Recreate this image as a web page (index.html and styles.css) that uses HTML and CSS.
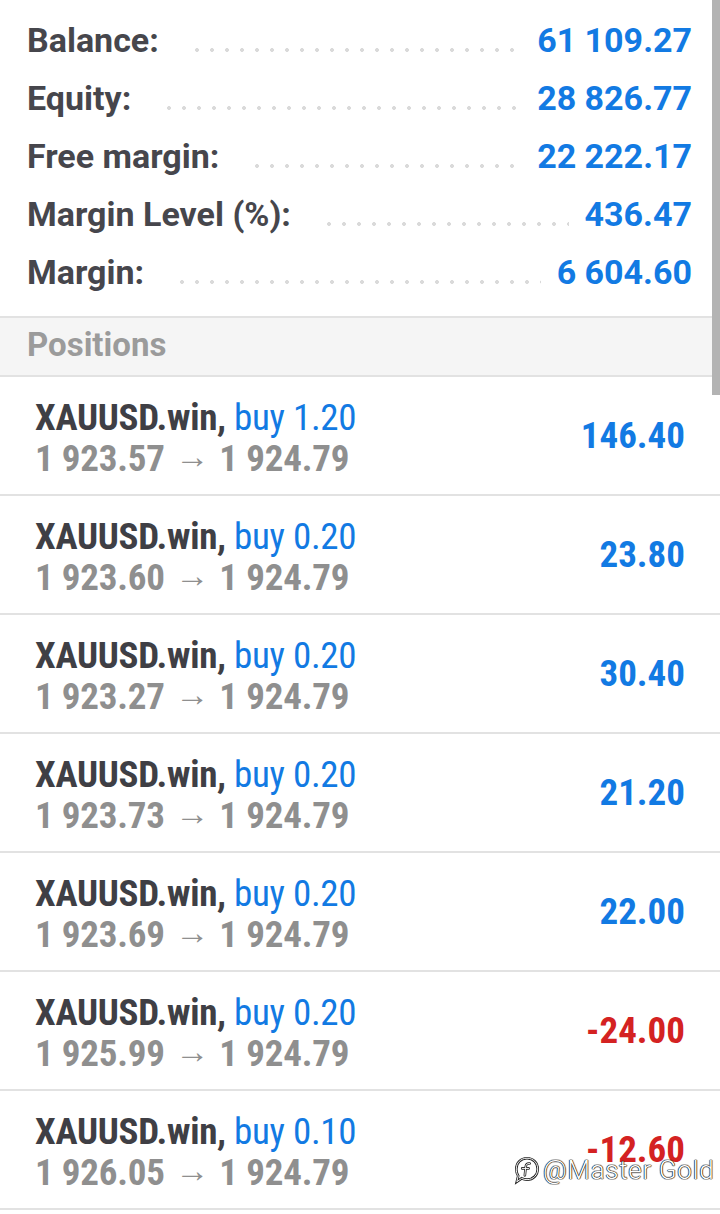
FILE: index.html
```html
<!DOCTYPE html>
<html>
<head>
<meta charset="utf-8">
<link rel="stylesheet" href="styles.css">
</head>
<body>
<div class="page">
  <section class="summary">
    <div class="srow"><span class="label">Balance:</span><span class="leader"></span><span class="value">61 109.27</span></div>
    <div class="srow"><span class="label">Equity:</span><span class="leader"></span><span class="value">28 826.77</span></div>
    <div class="srow"><span class="label">Free margin:</span><span class="leader"></span><span class="value">22 222.17</span></div>
    <div class="srow"><span class="label">Margin Level (%):</span><span class="leader"></span><span class="value">436.47</span></div>
    <div class="srow"><span class="label">Margin:</span><span class="leader"></span><span class="value">6 604.60</span></div>
  </section>
  <div class="section-head">Positions</div>
  <ul class="positions">
    <li class="pos"><div class="info"><div class="title"><b>XAUUSD.win,</b> <span class="side">buy 1.20</span></div><div class="prices">1 923.57 <span class="arrow">→</span> 1 924.79</div></div><div class="profit">146.40</div></li>
    <li class="pos"><div class="info"><div class="title"><b>XAUUSD.win,</b> <span class="side">buy 0.20</span></div><div class="prices">1 923.60 <span class="arrow">→</span> 1 924.79</div></div><div class="profit">23.80</div></li>
    <li class="pos"><div class="info"><div class="title"><b>XAUUSD.win,</b> <span class="side">buy 0.20</span></div><div class="prices">1 923.27 <span class="arrow">→</span> 1 924.79</div></div><div class="profit">30.40</div></li>
    <li class="pos"><div class="info"><div class="title"><b>XAUUSD.win,</b> <span class="side">buy 0.20</span></div><div class="prices">1 923.73 <span class="arrow">→</span> 1 924.79</div></div><div class="profit">21.20</div></li>
    <li class="pos"><div class="info"><div class="title"><b>XAUUSD.win,</b> <span class="side">buy 0.20</span></div><div class="prices">1 923.69 <span class="arrow">→</span> 1 924.79</div></div><div class="profit">22.00</div></li>
    <li class="pos"><div class="info"><div class="title"><b>XAUUSD.win,</b> <span class="side">buy 0.20</span></div><div class="prices">1 925.99 <span class="arrow">→</span> 1 924.79</div></div><div class="profit loss">-24.00</div></li>
    <li class="pos"><div class="info"><div class="title"><b>XAUUSD.win,</b> <span class="side">buy 0.10</span></div><div class="prices">1 926.05 <span class="arrow">→</span> 1 924.79</div></div><div class="profit loss">-12.60</div></li>
  </ul>
  <div class="scrollbar"></div>
  <div class="watermark">
    <svg class="wm-icon" width="28" height="30" viewBox="0 0 26 28">
      <path d="M13 3 C19 3 23 7.5 23 13 C23 18.5 19 23 13 23 C11 23 9.5 22.6 8 21.8 L3.5 25 L4.8 19.5 C3.6 17.8 3 15.5 3 13 C3 7.5 7 3 13 3 Z" fill="none" stroke="#222" stroke-width="2.4"/>
      <path d="M13 3 C19 3 23 7.5 23 13 C23 18.5 19 23 13 23 C11 23 9.5 22.6 8 21.8 L3.5 25 L4.8 19.5 C3.6 17.8 3 15.5 3 13 C3 7.5 7 3 13 3 Z" fill="none" stroke="#fff" stroke-width="0.9"/>
      <path d="M15.5 8 C13 7.5 12 9 11.8 11 L11 19 M8.5 12.5 L14.5 12.5" fill="none" stroke="#222" stroke-width="2.4" stroke-linecap="round"/>
      <path d="M15.5 8 C13 7.5 12 9 11.8 11 L11 19 M8.5 12.5 L14.5 12.5" fill="none" stroke="#fff" stroke-width="0.9" stroke-linecap="round"/>
    </svg>
    <span class="wm-text">@Master Gold</span>
  </div>
</div>
</body>
</html>
```
FILE: styles.css
```css
html, body {
  margin: 0;
  padding: 0;
  background: #ffffff;
}
body {
  font-family: Roboto, "Liberation Sans", sans-serif;
  width: 720px;
  overflow: hidden;
}
.page {
  position: relative;
  width: 720px;
  height: 1214px;
  overflow: hidden;
}
.summary {
  box-sizing: border-box;
  height: 316px;
  padding: 11px 28px 0 27px;
}
.srow {
  display: flex;
  align-items: baseline;
  height: 58px;
  line-height: 58px;
  font-size: 34px;
  font-weight: 700;
}
.label {
  color: #46464c;
  white-space: nowrap;
}
.leader {
  flex: 1;
  align-self: baseline;
  height: 4px;
  margin: 0 16px 2px 36px;
  background-image: radial-gradient(circle at 2px 2px, #dadada 1.7px, transparent 2.2px);
  background-size: 15px 4px;
  background-repeat: repeat-x;
}
.value {
  color: #127ae3;
  white-space: nowrap;
}
.section-head {
  box-sizing: border-box;
  height: 61px;
  border-top: 2px solid #e2e2e2;
  border-bottom: 2px solid #e2e2e2;
  background: #f5f5f5;
  padding: 0 27px 4px;
  line-height: 53px;
  font-size: 33px;
  font-weight: 700;
  color: #9b9b9b;
}
.positions {
  list-style: none;
  margin: 0;
  padding: 0;
}
.pos {
  box-sizing: border-box;
  height: 119px;
  display: flex;
  align-items: center;
  justify-content: space-between;
  padding: 4px 35px 0 35px;
  border-bottom: 2px solid #e2e2e2;
  font-stretch: 75%;
  font-size: 37px;
  line-height: 41px;
}
.info {
  display: flex;
  flex-direction: column;
}
.title {
  color: #3f3f45;
  white-space: nowrap;
  letter-spacing: -0.3px;
}
.title b {
  font-weight: 700;
}
.side {
  color: #127ae3;
  font-weight: 400;
}
.prices {
  color: #8f8f8f;
  font-weight: 700;
  white-space: nowrap;
  letter-spacing: -0.2px;
}
.arrow {
  font-weight: 400;
  font-size: 34px;
  line-height: 20px;
  vertical-align: 3px;
  margin: 0 2px;
}
.profit {
  color: #127ae3;
  font-weight: 700;
  margin-top: -4px;
}
.profit.loss {
  color: #d42222;
}
.scrollbar {
  position: absolute;
  top: 0;
  right: 0;
  width: 8px;
  height: 395px;
  background: #b3b3b3;
}
.watermark {
  position: absolute;
  left: 513px;
  top: 1155px;
  display: flex;
  align-items: center;
  gap: 2px;
}
.wm-text {
  font-family: Roboto, sans-serif;
  font-weight: 300;
  font-size: 26px;
  letter-spacing: 0.7px;
  color: #ffffff;
  text-shadow: 0 0 1px #111, 0 0 1px #111, 0 0 1px #111, 0 0 1px #111;
}
```
